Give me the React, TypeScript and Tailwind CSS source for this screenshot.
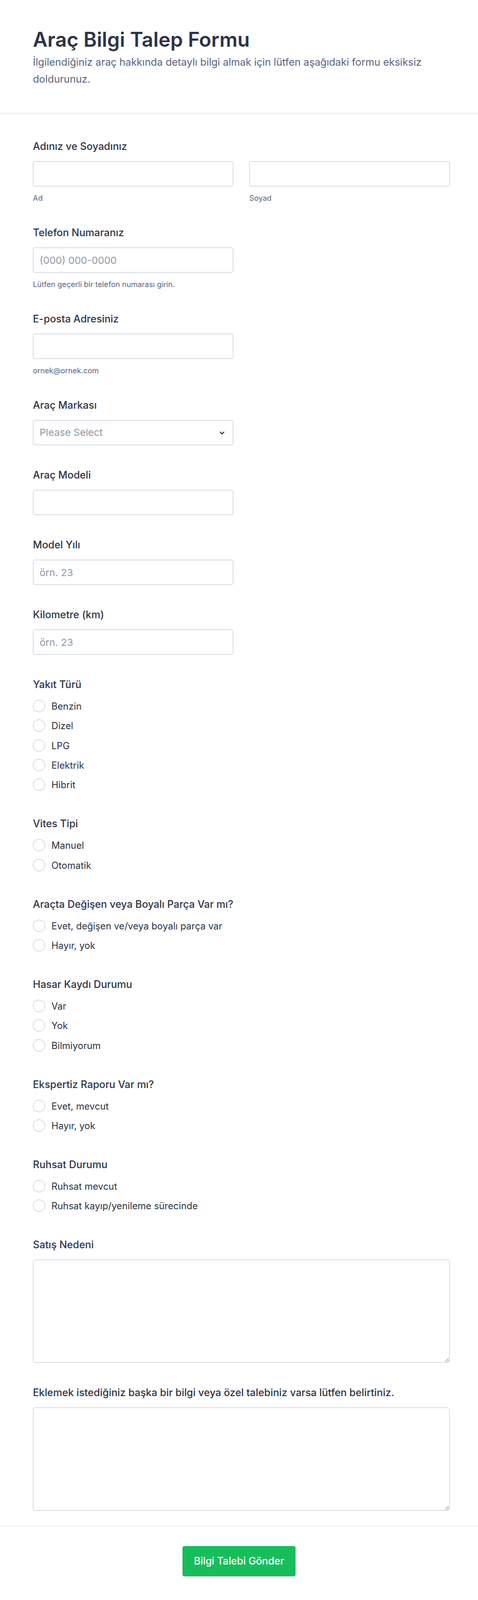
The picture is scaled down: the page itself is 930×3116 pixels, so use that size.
import React from 'react';

const labelCls = 'block text-[19.7px] leading-[28px] font-medium text-[#2c3345] mb-[15px]';
const inputCls =
  'block h-[49px] w-full rounded-[4px] border border-[#c3cad8] bg-white px-3 text-[19.3px] text-[#2c3345] placeholder:text-[#8d97ab] outline-none';
const subCls = 'mt-[14px] text-[14.7px] leading-[18px] text-[#57647e]';
const areaCls =
  'block h-[201px] w-full rounded-[4px] border border-[#c3cad8] bg-white px-3 py-2 text-[19px] text-[#2c3345] outline-none';

type RadioField = { label: string; options: string[] };

const radioFields: RadioField[] = [
  { label: 'Yakıt Türü', options: ['Benzin', 'Dizel', 'LPG', 'Elektrik', 'Hibrit'] },
  { label: 'Vites Tipi', options: ['Manuel', 'Otomatik'] },
  {
    label: 'Araçta Değişen veya Boyalı Parça Var mı?',
    options: ['Evet, değişen ve/veya boyalı parça var', 'Hayır, yok'],
  },
  { label: 'Hasar Kaydı Durumu', options: ['Var', 'Yok', 'Bilmiyorum'] },
  { label: 'Ekspertiz Raporu Var mı?', options: ['Evet, mevcut', 'Hayır, yok'] },
  { label: 'Ruhsat Durumu', options: ['Ruhsat mevcut', 'Ruhsat kayıp/yenileme sürecinde'] },
];

const Radio: React.FC<{ name: string; text: string }> = ({ name, text }) => (
  <label className="flex h-[26px] items-center gap-3 cursor-pointer">
    <input type="radio" name={name} className="peer sr-only" />
    <span className="h-6 w-6 shrink-0 rounded-full border-[1.5px] border-[#bfc5d2] bg-white" />
    <span className="text-[18.3px] leading-[26px] text-[#2c3345]">{text}</span>
  </label>
);

const App: React.FC = () => {
  return (
    <div className="min-h-screen bg-white font-['Inter',sans-serif]">
      <header className="border-b border-[#dfe2e8] pl-[64px] pr-[55px] pt-[54px] pb-[49px]">
        <h1 className="text-[39px] leading-[46px] font-semibold text-[#2c3345]">Araç Bilgi Talep Formu</h1>
        <p className="mt-[5px] text-[19.8px] leading-[33px] text-[#57647e]">
          İlgilendiğiniz araç hakkında detaylı bilgi almak için lütfen aşağıdaki formu eksiksiz doldurunuz.
        </p>
      </header>

      <form className="flex flex-col gap-[44px] pl-[64px] pr-[55px] pt-[50px] pb-[30px]">
        <div>
          <div className={labelCls}>Adınız ve Soyadınız</div>
          <div className="grid grid-cols-2 gap-[31px]">
            <div>
              <input className={inputCls} />
              <div className={subCls}>Ad</div>
            </div>
            <div>
              <input className={inputCls} />
              <div className={subCls}>Soyad</div>
            </div>
          </div>
        </div>

        <div>
          <div className={labelCls}>Telefon Numaranız</div>
          <div className="w-[390px]">
            <input className={inputCls} placeholder="(000) 000-0000" />
            <div className={subCls}>Lütfen geçerli bir telefon numarası girin.</div>
          </div>
        </div>

        <div>
          <div className={labelCls}>E-posta Adresiniz</div>
          <div className="w-[390px]">
            <input className={inputCls} />
            <div className={subCls}>ornek@ornek.com</div>
          </div>
        </div>

        <div>
          <div className={labelCls}>Araç Markası</div>
          <div className="relative w-[390px]">
            <select className={`${inputCls} appearance-none text-[#8d97ab]`} defaultValue="">
              <option value="" disabled>
                Please Select
              </option>
            </select>
            <svg
              className="pointer-events-none absolute right-[16px] top-1/2 h-[12px] w-[12px] -translate-y-1/2"
              viewBox="0 0 12 12"
              fill="none"
              stroke="#2c3345"
              strokeWidth="2"
              strokeLinecap="round"
              strokeLinejoin="round"
            >
              <path d="M2.5 4.5 6 8 9.5 4.5" />
            </svg>
          </div>
        </div>

        <div>
          <div className={labelCls}>Araç Modeli</div>
          <div className="w-[390px]">
            <input className={inputCls} />
          </div>
        </div>

        <div>
          <div className={labelCls}>Model Yılı</div>
          <div className="w-[390px]">
            <input className={inputCls} placeholder="örn. 23" />
          </div>
        </div>

        <div>
          <div className={labelCls}>Kilometre (km)</div>
          <div className="w-[390px]">
            <input className={inputCls} placeholder="örn. 23" />
          </div>
        </div>

        {radioFields.map((f, i) => (
          <div key={f.label} className="pb-[5px]">
            <div className={labelCls}>{f.label}</div>
            <div className="flex flex-col gap-[12.33px]">
              {f.options.map(o => (
                <Radio key={o} name={`r${i}`} text={o} />
              ))}
            </div>
          </div>
        ))}

        <div>
          <div className={labelCls}>Satış Nedeni</div>
          <textarea className={areaCls} />
        </div>

        <div>
          <div className={labelCls}>Eklemek istediğiniz başka bir bilgi veya özel talebiniz varsa lütfen belirtiniz.</div>
          <textarea className={areaCls} />
        </div>
      </form>

      <div className="flex justify-center border-t border-[#e8eaef] pt-[38px] pb-[49px]">
        <button className="h-[59px] rounded-[4px] bg-[#18bd5b] px-[22px] text-[19.6px] font-medium text-white">
          Bilgi Talebi Gönder
        </button>
      </div>
    </div>
  );
};

export default App;
